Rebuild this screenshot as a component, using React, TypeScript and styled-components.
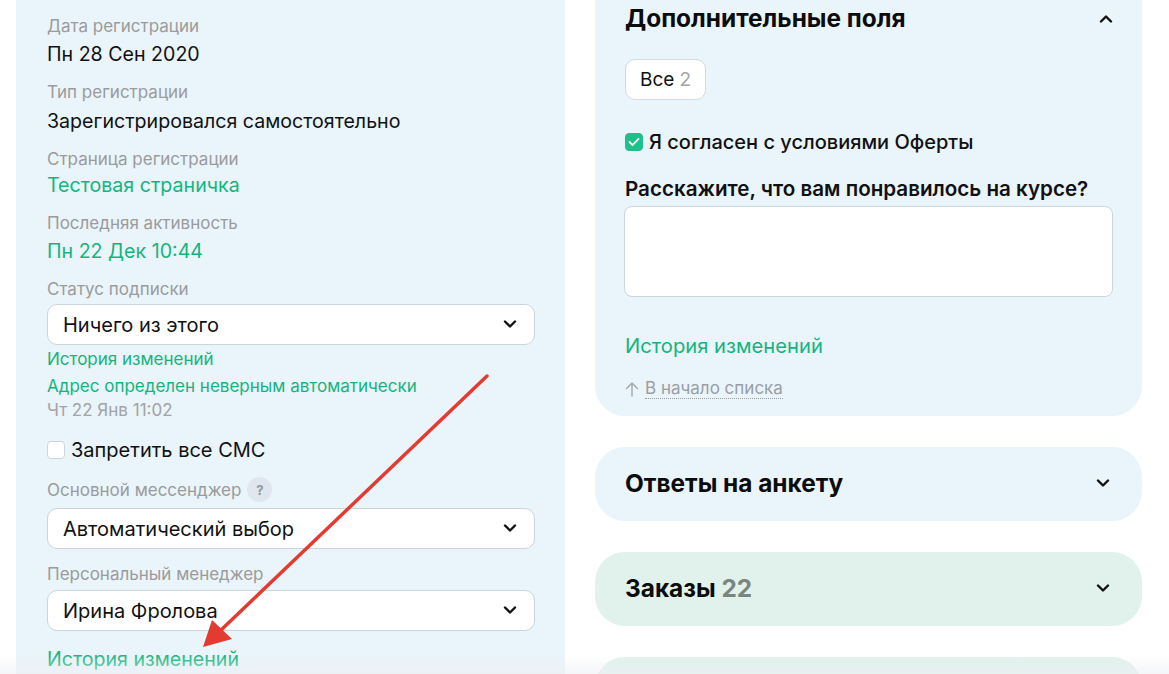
import React from "react";
import styled, { createGlobalStyle } from "styled-components";

const Global = createGlobalStyle`
  html, body { margin: 0; padding: 0; background: #ffffff; overflow: hidden; }
  body { font-family: Inter, "Noto Sans", Arial, sans-serif; color: #111; }
  * { box-sizing: border-box; }
`;

const Page = styled.div`
  position: relative;
  display: grid;
  grid-template-columns: 549px 547px;
  column-gap: 30px;
  align-items: start;
  padding-left: 16px;
  margin-top: -50px;
  height: 724px;
  overflow: hidden;
`;

const LeftPanel = styled.section`
  background: #e9f4fb;
  border-radius: 0 0 30px 30px;
  padding: 9px 30px 40px 31px;
  display: flex;
  flex-direction: column;
  gap: 13px;
`;

const TopButton = styled.div`
  width: 109px;
  height: 40px;
  margin-left: 2px;
  margin-bottom: 3px;
  border: 1px solid #cfd6dd;
  border-radius: 12px;
  background: #ffffff;
`;

const Field = styled.div<{ $gap?: number; $mt?: number }>`
  display: flex;
  flex-direction: column;
  gap: ${(p) => p.$gap ?? 4}px;
  margin-top: ${(p) => p.$mt ?? 0}px;
`;

const Label = styled.div`
  font-size: 17px;
  line-height: 22px;
  color: #9b9b9b;
  display: flex;
  align-items: center;
  gap: 6px;
`;

const Value = styled.div`
  font-size: 19.6px;
  line-height: 28px;
  color: #111;
`;

const Link = styled.a<{ $size?: number; $lh?: number; $mt?: number }>`
  display: block;
  font-size: ${(p) => p.$size ?? 19.6}px;
  line-height: ${(p) => p.$lh ?? 28}px;
  margin-top: ${(p) => p.$mt ?? 0}px;
  color: #15b47e;
  text-decoration: none;
  cursor: pointer;
`;

const Muted = styled.div`
  font-size: 17px;
  line-height: 22px;
  margin-top: 2px;
  color: #a3a3a3;
`;

const Help = styled.span`
  width: 25px;
  height: 25px;
  border-radius: 50%;
  background: #dfe6ed;
  color: #8d969e;
  font-size: 13px;
  font-weight: 700;
  display: inline-flex;
  align-items: center;
  justify-content: center;
`;

const SelectBox = styled.div`
  height: 41px;
  background: #ffffff;
  border: 1px solid #cdd5dc;
  border-radius: 10px;
  padding: 0 17px 0 15px;
  display: flex;
  align-items: center;
  justify-content: space-between;
  font-size: 20px;
  color: #111;
`;

const CheckRow = styled.label<{ $weight?: number; $mt?: number; $mb?: number }>`
  display: flex;
  align-items: center;
  gap: 6px;
  font-size: 20px;
  line-height: 28px;
  font-weight: ${(p) => p.$weight ?? 400};
  margin-top: ${(p) => p.$mt ?? 0}px;
  margin-bottom: ${(p) => p.$mb ?? 0}px;
  color: #111;
`;

const Box = styled.span<{ $checked?: boolean }>`
  width: 18px;
  height: 18px;
  border-radius: 4px;
  flex: none;
  display: inline-flex;
  align-items: center;
  justify-content: center;
  background: ${(p) => (p.$checked ? "#1fbf88" : "#ffffff")};
  border: 1px solid ${(p) => (p.$checked ? "#1fbf88" : "#cfd6dd")};
`;

const RightColumn = styled.div`
  display: flex;
  flex-direction: column;
  gap: 31px;
`;

const Card = styled.section<{ $tone?: "blue" | "green" }>`
  background: ${(p) => (p.$tone === "green" ? "#e1f2ec" : "#e9f4fb")};
  border-radius: 30px;
  padding: 22px 32px 24px 30px;
  min-height: 74px;
  display: flex;
  flex-direction: column;
`;

const OpenCard = styled(Card)`
  padding: 54px 29px 17px 30px;
`;

const CardHead = styled.div`
  display: flex;
  align-items: center;
  justify-content: space-between;
  height: 28px;
`;

const CardTitle = styled.h2`
  margin: 0;
  font-size: 24.4px;
  line-height: 28px;
  font-weight: 700;
  color: #0c0c0c;
`;

const Count = styled.span`
  color: #7b8580;
`;

const Pill = styled.div`
  align-self: flex-start;
  margin-top: 27px;
  height: 41px;
  padding: 0 14px;
  display: flex;
  align-items: center;
  gap: 5px;
  background: #ffffff;
  border: 1px solid #d3dbe2;
  border-radius: 10px;
  font-size: 19px;
`;

const PillCount = styled.span`
  color: #a3a3a3;
`;

const Question = styled.div`
  margin-top: 20px;
  font-size: 20.6px;
  line-height: 26px;
  font-weight: 600;
  color: #111;
`;

const TextArea = styled.div`
  margin-top: 4px;
  height: 91px;
  background: #ffffff;
  border: 1px solid #cdd5dc;
  border-radius: 8px;
  margin-left: -1px;
`;

const BackTop = styled.div`
  margin-top: 20px;
  display: flex;
  align-items: center;
  gap: 6px;
  font-size: 17px;
  line-height: 22px;
  color: #9a9ea4;
`;

const Dotted = styled.span`
  border-bottom: 1px dotted #9a9ea4;
  line-height: 19px;
`;

const Fade = styled.div`
  position: fixed;
  left: 0;
  right: 0;
  bottom: 0;
  height: 20px;
  background: linear-gradient(to bottom, rgba(255, 255, 255, 0), rgba(238, 240, 242, 0.6));
  pointer-events: none;
`;

const ArrowLayer = styled.svg`
  position: fixed;
  left: 0;
  top: 0;
  pointer-events: none;
`;

const Chevron = ({ up }: { up?: boolean }) => (
  <svg width="14" height="9" viewBox="0 0 14 9" fill="none">
    <polyline
      points={up ? "2,7.5 7,2.5 12,7.5" : "2,1.5 7,6.5 12,1.5"}
      stroke="#111"
      strokeWidth="2.4"
      strokeLinecap="round"
      strokeLinejoin="round"
    />
  </svg>
);

const Check = () => (
  <svg width="12" height="10" viewBox="0 0 12 10" fill="none">
    <polyline points="1.5,5 4.6,8 10.5,1.8" stroke="#fff" strokeWidth="1.8" strokeLinecap="round" strokeLinejoin="round" />
  </svg>
);

const UpArrow = () => (
  <svg width="14" height="16" viewBox="0 0 14 16" fill="none">
    <path d="M7 15V2M1.5 7.5L7 2l5.5 5.5" stroke="#a5abb2" strokeWidth="1.5" strokeLinecap="round" strokeLinejoin="round" />
  </svg>
);

const Select = ({ value }: { value: string }) => (
  <SelectBox>
    <span>{value}</span>
    <Chevron />
  </SelectBox>
);

export default function App() {
  return (
    <>
      <Global />
      <Page>
        <LeftPanel>
          <TopButton />
          <Field $gap={3}>
            <Label>Дата регистрации</Label>
            <Value>Пн 28 Сен 2020</Value>
          </Field>
          <Field $gap={4}>
            <Label>Тип регистрации</Label>
            <Value>Зарегистрировался самостоятельно</Value>
          </Field>
          <Field $gap={1}>
            <Label>Страница регистрации</Label>
            <Link>Тестовая страничка</Link>
          </Field>
          <Field $gap={3}>
            <Label>Последняя активность</Label>
            <Link>Пн 22 Дек 10:44</Link>
          </Field>
          <Field $gap={0}>
            <Label>Статус подписки</Label>
            <Field $gap={3} $mt={4}>
              <Select value="Ничего из этого" />
              <Link $size={17} $lh={22}>История изменений</Link>
            </Field>
            <Link $size={17} $lh={22} $mt={5}>Адрес определен неверным автоматически</Link>
            <Muted>Чт 22 Янв 11:02</Muted>
          </Field>
          <CheckRow $mt={2}>
            <Box />
            Запретить все СМС
          </CheckRow>
          <Field $gap={6}>
            <Label>
              Основной мессенджер <Help>?</Help>
            </Label>
            <Select value="Автоматический выбор" />
          </Field>
          <Field $gap={5} $mt={1}>
            <Label>Персональный менеджер</Label>
            <Select value="Ирина Фролова" />
          </Field>
          <Link $mt={1}>История изменений</Link>
        </LeftPanel>

        <RightColumn>
          <OpenCard>
            <CardHead>
              <CardTitle>Дополнительные поля</CardTitle>
              <Chevron up />
            </CardHead>
            <Pill>
              Все <PillCount>2</PillCount>
            </Pill>
            <CheckRow $weight={500} $mt={28}>
              <Box $checked>
                <Check />
              </Box>
              Я согласен с условиями Оферты
            </CheckRow>
            <Question>Расскажите, что вам понравилось на курсе?</Question>
            <TextArea />
            <Link $size={20.2} $lh={26} $mt={36}>История изменений</Link>
            <BackTop>
              <UpArrow />
              <Dotted>В начало списка</Dotted>
            </BackTop>
          </OpenCard>
          <Card>
            <CardHead>
              <CardTitle>Ответы на анкету</CardTitle>
              <Chevron />
            </CardHead>
          </Card>
          <Card $tone="green">
            <CardHead>
              <CardTitle>
                Заказы <Count>22</Count>
              </CardTitle>
              <Chevron />
            </CardHead>
          </Card>
          <Card $tone="green" />
        </RightColumn>
      </Page>
      <Fade />
      <ArrowLayer width="1169" height="674" viewBox="0 0 1169 674">
        <line x1="487" y1="376" x2="220" y2="631" stroke="#e53a30" strokeWidth="3.5" strokeLinecap="round" />
        <polygon points="203,647 212,620 232,639" fill="#e53a30" />
      </ArrowLayer>
    </>
  );
}
